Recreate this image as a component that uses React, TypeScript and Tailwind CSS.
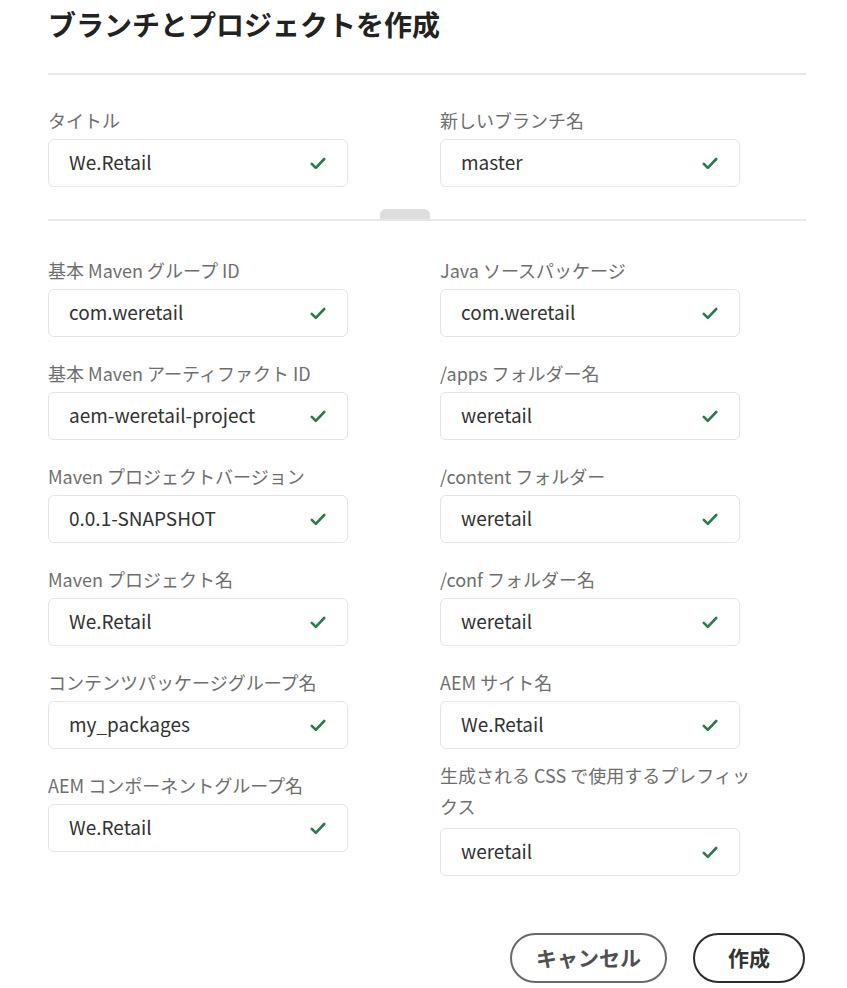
import React from "react"

type Field = { label: string; value: string }

const leftFields: Field[] = [
    { label: "基本 Maven グループ ID", value: "com.weretail" },
    { label: "基本 Maven アーティファクト ID", value: "aem-weretail-project" },
    { label: "Maven プロジェクトバージョン", value: "0.0.1-SNAPSHOT" },
    { label: "Maven プロジェクト名", value: "We.Retail" },
    { label: "コンテンツパッケージグループ名", value: "my_packages" },
    { label: "AEM コンポーネントグループ名", value: "We.Retail" },
]

const rightFields: Field[] = [
    { label: "Java ソースパッケージ", value: "com.weretail" },
    { label: "/apps フォルダー名", value: "weretail" },
    { label: "/content フォルダー", value: "weretail" },
    { label: "/conf フォルダー名", value: "weretail" },
    { label: "AEM サイト名", value: "We.Retail" },
]

const Check = () => (
    <svg width="16" height="13" viewBox="0 0 16 13" fill="none">
        <path d="M1.8 6.8 L5.8 10.8 L14.2 2" stroke="#2b7a4b" strokeWidth="2.6" strokeLinecap="round" strokeLinejoin="round" />
    </svg>
)

const Input = ({ value }: { value: string }) => (
    <div className="w-[300px] h-[48px] flex items-center justify-between pl-[20px] pr-[21px] border border-[#e4e4e4] rounded-[6px] bg-white">
        <span className="text-[19px] text-[#323232] leading-none pb-[4px]">{value}</span>
        <Check />
    </div>
)

const FormField = ({ label, value }: Field) => (
    <div className="flex flex-col">
        <label className="text-[18px] leading-[26px] text-[#6e6e6e]">{label}</label>
        <div className="mt-[6px]">
            <Input value={value} />
        </div>
    </div>
)

const App = () => {
    return (
        <div
            className="w-[847px] h-[988px] bg-white overflow-hidden"
            style={{ fontFamily: '"Noto Sans CJK JP", "Noto Sans", sans-serif' }}
        >
            <div className="ml-[48px] w-[758px] pt-[4px]">
                <h1 className="text-[28px] leading-[40px] font-bold text-[#222222]">ブランチとプロジェクトを作成</h1>

                <div className="mt-[29px] h-[2px] bg-[#e8e8e8]" />

                <div className="mt-[32px] flex">
                    <div className="w-[392px]">
                        <FormField label="タイトル" value="We.Retail" />
                    </div>
                    <div className="flex-1">
                        <FormField label="新しいブランチ名" value="master" />
                    </div>
                </div>

                {/* split handle */}
                <div className="mt-[22px] flex flex-col">
                    <div className="ml-[332px] w-[50px] h-[10px] rounded-t-[6px] bg-[#dedede]" />
                    <div className="h-[2px] bg-[#e8e8e8]" />
                </div>

                <div className="mt-[36px] flex">
                    <div className="w-[392px] flex flex-col gap-[23px]">
                        {leftFields.map((f, i) => (
                            <FormField key={i} label={f.label} value={f.value} />
                        ))}
                    </div>
                    <div className="flex-1 flex flex-col gap-[23px]">
                        {rightFields.map((f, i) => (
                            <FormField key={i} label={f.label} value={f.value} />
                        ))}
                        <div className="flex flex-col -mt-[12px]">
                            <label className="w-[322px] text-[18px] leading-[31px] text-[#6e6e6e]">
                                生成される CSS で使用するプレフィックス
                            </label>
                            <div className="mt-[6px]">
                                <Input value="weretail" />
                            </div>
                        </div>
                    </div>
                </div>

                <div className="mt-[57px] flex justify-end gap-[26px] pr-[1px]">
                    <button className="w-[157px] h-[50px] rounded-full border-2 border-[#6a6a6a] text-[21px] font-bold text-[#505050] bg-white">
                        キャンセル
                    </button>
                    <button className="w-[112px] h-[50px] rounded-full border-2 border-[#2c2c2c] text-[21px] font-bold text-[#333333] bg-white">
                        作成
                    </button>
                </div>
            </div>
        </div>
    )
}

export default App
